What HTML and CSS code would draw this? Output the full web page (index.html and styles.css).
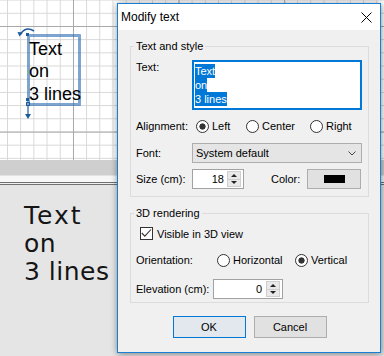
FILE: index.html
```html
<!DOCTYPE html>
<html lang="en">
<head>
  <meta charset="UTF-8" />
  <title>Modify text</title>
  <meta name="viewport" content="width=device-width, initial-scale=1.0"/>
  <link rel="stylesheet" href="styles.css">
</head>
<body>
  <div class="plan">
    <div class="plan-text">Text<br>on<br>3 lines</div>
    <div class="plan-box"></div>
    <svg class="plan-handles" width="24" height="100" viewBox="0 0 24 100">
      <path d="M6.5 10 Q12 2 20 7" fill="none" stroke="#1d5c9c" stroke-width="1.5"/>
      <path d="M3.5 8 L9 8.5 L5.5 12.5 Z" fill="#1d5c9c"/>
      <rect x="12" y="9" width="3" height="3" fill="#1d5c9c"/>
      <rect x="12" y="74" width="3" height="3" fill="#1d5c9c"/>
      <rect x="12.5" y="78.5" width="3" height="3" fill="none" stroke="#1d5c9c"/>
      <line x1="14" y1="82" x2="14" y2="91" stroke="#1d5c9c" stroke-width="1.2"/>
      <path d="M11 90 L17 90 L14 95 Z" fill="#1d5c9c"/>
    </svg>
  </div>
  <div class="hbar"></div>
  <div class="splitter"></div>
  <div class="view3d"><span class="wide">Text</span><br>on<br>3 lines</div>

  <div class="dialog">
    <div class="titlebar">
      <span class="title">Modify text</span>
      <svg class="close" width="11" height="11" viewBox="0 0 11 11">
        <path d="M0.5 0.5 L10.5 10.5 M10.5 0.5 L0.5 10.5" stroke="#000" stroke-width="1"/>
      </svg>
    </div>

    <div class="dialog-body">
      <fieldset class="group">
        <legend>Text and style</legend>

        <div class="row row-text">
          <span class="lbl">Text:</span>
          <div class="textarea">
            <span class="sel">Text</span>
            <span class="sel">on</span>
            <span class="sel">3 lines</span>
          </div>
        </div>

        <div class="row row-align">
          <span class="lbl">Alignment:</span>
          <span class="opt opt-left"><span class="radio on"></span>Left</span>
          <span class="opt opt-center"><span class="radio"></span>Center</span>
          <span class="opt"><span class="radio"></span>Right</span>
        </div>

        <div class="row row-font">
          <span class="lbl">Font:</span>
          <div class="combo">
            <span>System default</span>
            <svg width="8" height="5" viewBox="0 0 8 5">
              <polyline points="0.5,0.5 4,4 7.5,0.5" fill="none" stroke="#444" stroke-width="1"/>
            </svg>
          </div>
        </div>

        <div class="row row-size">
          <span class="lbl">Size (cm):</span>
          <div class="spinner spinner-size">
            <span class="value">18</span>
            <span class="spin">
              <span class="spin-up"></span>
              <span class="spin-down"></span>
            </span>
          </div>
          <span class="lbl-color">Color:</span>
          <div class="color-btn"><span class="swatch"></span></div>
        </div>
      </fieldset>

      <fieldset class="group group-3d">
        <legend>3D rendering</legend>

        <div class="row row-check">
          <span class="checkbox">
            <svg width="11" height="11" viewBox="0 0 11 11">
              <polyline points="0.8,5 3.8,8.2 10,1.5" fill="none" stroke="#333" stroke-width="1.1"/>
            </svg>
          </span>
          Visible in 3D view
        </div>

        <div class="row row-orient">
          <span class="lbl lbl-orient">Orientation:</span>
          <span class="opt opt-horizontal"><span class="radio"></span>Horizontal</span>
          <span class="opt"><span class="radio on"></span>Vertical</span>
        </div>

        <div class="row row-elev">
          <span class="lbl lbl-elev">Elevation (cm):</span>
          <div class="spinner spinner-elev">
            <span class="value">0</span>
            <span class="spin">
              <span class="spin-up"></span>
              <span class="spin-down"></span>
            </span>
          </div>
        </div>
      </fieldset>

      <div class="buttons">
        <button class="btn btn-default">OK</button>
        <button class="btn">Cancel</button>
      </div>
    </div>
  </div>
</body>
</html>
```

FILE: styles.css
```css
body {
  margin: 0;
  width: 384px;
  height: 356px;
  overflow: hidden;
  position: relative;
  background: #e6e6e6;
  font-family: "Liberation Sans", Arial, sans-serif;
  color: #000;
}

/* Plan view */
.plan {
  position: relative;
  height: 160px;
  background-color: #fff;
  background-image:
    linear-gradient(to bottom, #a9a9a9 1px, transparent 1px),
    linear-gradient(to right, #a9a9a9 1px, transparent 1px),
    linear-gradient(to bottom, #d7d7d7 1px, transparent 1px),
    linear-gradient(to right, #d7d7d7 1px, transparent 1px);
  background-size: 100% 105.6px, 105.6px 100%, 100% 13.2px, 13.2px 100%;
  background-position: 0 26px, 73px 0, 0 12.8px, 7px 0;
}
.plan-text {
  position: absolute;
  left: 29px;
  top: 37.5px;
  font-size: 18px;
  line-height: 22.5px;
  white-space: nowrap;
  z-index: 1;
}
.plan-box {
  position: absolute;
  left: 27px;
  top: 34px;
  width: 54px;
  height: 72px;
  box-sizing: border-box;
  border: 3px solid rgba(40, 105, 175, 0.6);
  border-radius: 1px;
}
.plan-handles {
  position: absolute;
  left: 14px;
  top: 24px;
}
.hbar {
  height: 15px;
  background: #cfcfcf;
  border-bottom: 1px solid #e2e2e2;
}
.splitter {
  height: 9px;
  background: linear-gradient(#f7f7f7 0 6px, #707070 6px 7px, #f0f0f0 7px 8px, #707070 8px 9px);
}

/* 3D view */
.view3d {
  height: 171px;
  box-sizing: border-box;
  padding: 17px 0 0 24px;
  background: #e5e5e5;
  font-family: "DejaVu Sans", Verdana, sans-serif;
  font-size: 25px;
  line-height: 28px;
  letter-spacing: 0.5px;
  color: #151515;
}
.view3d .wide {
  letter-spacing: 2px;
}

/* Dialog */
.dialog {
  position: absolute;
  left: 117px;
  top: 3px;
  width: 264px;
  height: 350px;
  box-sizing: border-box;
  border: 1px solid #1a7fd4;
  background: #f0f0f0;
  box-shadow: 0 0 7px rgba(0,0,0,0.3), 1px 2px 6px rgba(0,0,0,0.2);
  font-size: 11px;
}
.titlebar {
  height: 26px;
  background: #fff;
  display: flex;
  align-items: center;
  padding-left: 3px;
}
.title {
  font-size: 12px;
}
.close {
  margin-left: auto;
  margin-right: 8px;
}
.dialog-body {
  padding: 0 11px 14px 12px;
}

.group {
  margin: 8px 0 0;
  padding: 6px 5px 7px;
  border: 1px solid #dcdcdc;
  min-width: 0;
}
.group legend {
  padding: 0 2px;
  margin-left: -2px;
  line-height: 16px;
}
.group-3d {
  padding-bottom: 3px;
}

.row {
  display: flex;
  align-items: center;
}
.lbl {
  width: 56px;
  flex: none;
}
.row-text {
  align-items: flex-start;
}
.row-text .lbl {
  line-height: 14px;
}
.textarea {
  width: 170px;
  height: 50px;
  box-sizing: border-box;
  border: 2px solid #0078d7;
  background: #fff;
  padding: 2px 1px;
}
.sel {
  display: block;
  width: fit-content;
  line-height: 14px;
  background: #0078d7;
  color: #fff;
}

.row-align {
  margin-top: 8px;
  height: 16px;
}
.opt {
  display: flex;
  align-items: center;
  gap: 3px;
  flex: none;
}
.row-align .opt-left {
  margin-left: 4px;
  width: 50px;
}
.opt-center {
  width: 64px;
}
.radio {
  width: 13px;
  height: 13px;
  box-sizing: border-box;
  border: 1px solid #333;
  border-radius: 50%;
  background: #fff;
  flex: none;
}
.radio.on {
  background: radial-gradient(circle, #333 0 2.8px, #fff 3.4px);
}

.row-font {
  margin-top: 9px;
}
.combo {
  width: 170px;
  height: 20px;
  box-sizing: border-box;
  border: 1px solid #adadad;
  background: #e5e5e5;
  display: flex;
  align-items: center;
  justify-content: space-between;
  padding: 0 5px 0 3px;
}

.row-size {
  margin-top: 6px;
}
.spinner {
  height: 20px;
  box-sizing: border-box;
  border: 1px solid #a2a2a2;
  background: #fff;
  display: flex;
  flex: none;
}
.spinner .value {
  flex: 1;
  text-align: right;
  line-height: 18px;
}
.spinner-size {
  width: 52px;
}
.spinner-size .value {
  padding-right: 3px;
}
.spinner-elev {
  width: 70px;
}
.spinner-elev .value {
  padding-right: 4px;
}
.spin {
  width: 14px;
  margin: 1px 2px 1px 0;
  display: flex;
  flex-direction: column;
  border: 1px solid #cfcfcf;
  box-sizing: border-box;
  background: #e9e9e9;
}
.spin-up,
.spin-down {
  flex: 1;
  display: flex;
  align-items: center;
  justify-content: center;
}
.spin-up {
  border-bottom: 1px solid #cfcfcf;
}
.spin-up::after {
  content: "";
  border-left: 3px solid transparent;
  border-right: 3px solid transparent;
  border-bottom: 3px solid #222;
}
.spin-down::after {
  content: "";
  border-left: 3px solid transparent;
  border-right: 3px solid transparent;
  border-top: 3px solid #222;
}
.lbl-color {
  margin-left: 27px;
  width: 36px;
  flex: none;
}
.color-btn {
  width: 54px;
  height: 20px;
  box-sizing: border-box;
  border: 1px solid #adadad;
  background: #e1e1e1;
  display: flex;
  align-items: center;
  justify-content: center;
}
.swatch {
  width: 21px;
  height: 8px;
  background: #000;
}

.row-check {
  margin-left: 4px;
  gap: 4px;
  height: 13px;
}
.checkbox {
  width: 13px;
  height: 13px;
  box-sizing: border-box;
  border: 1px solid #333;
  background: #fff;
  display: flex;
}
.row-orient {
  margin-top: 12px;
  height: 16px;
}
.lbl-orient {
  width: 81px;
}
.opt-horizontal {
  width: 78px;
}
.row-elev {
  margin-top: 11px;
}
.lbl-elev {
  width: 77px;
}

.buttons {
  display: flex;
  justify-content: center;
  gap: 8px;
  margin-top: 13px;
}
.btn {
  width: 73px;
  height: 22px;
  box-sizing: border-box;
  border: 1px solid #adadad;
  background: #e1e1e1;
  font-family: inherit;
  font-size: 11px;
  color: #000;
  padding: 0;
}
.btn-default {
  border-color: #0078d7;
  background: #e3e8ee;
}
```
